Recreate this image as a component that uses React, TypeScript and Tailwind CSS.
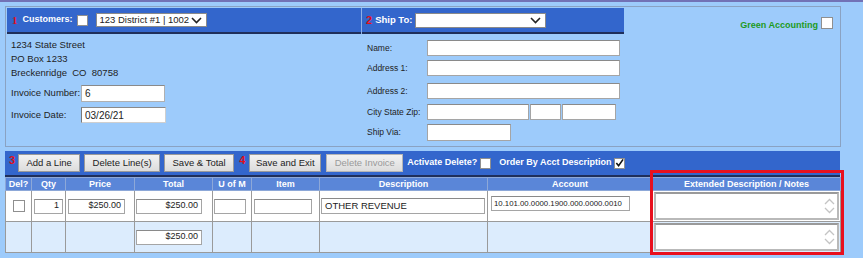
import React from 'react'

function Chevron({ className = '' }: { className?: string }) {
  return (
    <svg width={11} height={7} viewBox="0 0 11 7" fill="none" stroke="#222" strokeWidth={1.6} className={className}>
      <path d="M1 1 L5.5 5.5 L10 1" />
    </svg>
  )
}

function Check({ checked = false, size = 'w-[11px] h-[11px]' }: { checked?: boolean; size?: string }) {
  return (
    <span className={`${size} inline-flex items-center justify-center bg-white border border-[#8f8f8f] shrink-0`}>
      {checked && (
        <svg width={10} height={10} viewBox="0 0 10 10" fill="none" stroke="#111" strokeWidth={1.8}>
          <path d="M1.5 5 L4 8 L9 1" />
        </svg>
      )}
    </span>
  )
}

function Field({
  className = '',
  value = '',
  right = false,
  text = 'text-[9px] px-[3px]',
}: {
  className?: string
  value?: string
  right?: boolean
  text?: string
}) {
  return (
    <div
      className={`bg-white border border-[#a5a5a5] border-t-[#8a8a8a] text-[#222] flex items-center whitespace-nowrap shrink-0 ${text} ${right ? 'justify-end' : ''} ${className}`}
    >
      {value}
    </div>
  )
}

function Btn({ label, disabled = false, w }: { label: string; disabled?: boolean; w: string }) {
  return (
    <div
      className={`${w} h-[18px] flex items-center justify-center border bg-gradient-to-b from-[#f2f2f2] to-[#dcdcdc] text-[9.5px] whitespace-nowrap ${disabled ? 'text-[#9a9a9a] border-[#b5b5b5]' : 'text-[#222] border-[#9a9a9a]'}`}
    >
      {label}
    </div>
  )
}

function Notes() {
  return (
    <div className="h-[28px] bg-white border-2 border-[#b9b9b9] border-t-[#9a9a9a] flex justify-end pr-[2px]">
      <div className="flex flex-col justify-center gap-[2px]">
        <svg width={11} height={7} viewBox="0 0 11 7" fill="none" stroke="#c4c4c4" strokeWidth={1.3}>
          <path d="M1 6 L5.5 1.5 L10 6" />
        </svg>
        <svg width={11} height={7} viewBox="0 0 11 7" fill="none" stroke="#c4c4c4" strokeWidth={1.3}>
          <path d="M1 1 L5.5 5.5 L10 1" />
        </svg>
      </div>
    </div>
  )
}

const cols = [26, 34, 69, 78, 39, 68, 168, 165, 188]
const heads = ['Del?', 'Qty', 'Price', 'Total', 'U of M', 'Item', 'Description', 'Account', 'Extended Description / Notes']

export default function App() {
  return (
    <div className="relative w-[863px] h-[258px] overflow-hidden bg-[#9dcbfb] border-t-2 border-[#7272b6] font-['Liberation_Sans',Arial,sans-serif] text-[10px] text-[#1e1e1e]">
      {/* Top panel */}
      <div className="ml-[5px] mt-[4px] w-[836px] h-[141px] border border-[#8aa2c2] p-[1px] flex">
        {/* Customer column */}
        <div className="w-[354px] flex flex-col">
          <div className="h-[26px] bg-[#3366cc] border-b-2 border-[#1f2f5a] flex items-center pl-[5px] gap-[3px]">
            <span className="text-[#e0101a] font-bold text-[11px] font-['Liberation_Serif',serif]">1</span>
            <span className="text-white font-bold text-[9px] ml-[2px]">Customers:</span>
            <Check size="w-[11px] h-[11px] ml-[1px]" />
            <div className="ml-[5px] w-[111px] h-[14px] bg-white border border-[#8a8a8a] flex items-center justify-between pl-[3px] pr-[4px] text-[9.5px] text-[#222] whitespace-nowrap shrink-0">
              <span>123 District #1 | 1002</span>
              <Chevron />
            </div>
          </div>
          <div className="pl-[4px] pt-[4px] flex flex-col text-[9.5px]">
            <div className="h-[14px] flex items-center">1234 State Street</div>
            <div className="h-[14px] flex items-center">PO Box 1233</div>
            <div className="h-[14px] flex items-center whitespace-pre">Breckenridge  CO  80758</div>
            <div className="mt-[5px] flex items-center">
              <span className="w-[70px]">Invoice Number:</span>
              <Field className="w-[84px] h-[17px] border-[#b0b0b0]" text="text-[10px] px-[3px]" value="6" />
            </div>
            <div className="mt-[5px] flex items-center">
              <span className="w-[70px]">Invoice Date:</span>
              <Field className="w-[85px] h-[16px] border-[#cfcfcf] border-t-[#7a7a7a] border-l-[#7a7a7a]" text="text-[10px] px-[3px]" value="03/26/21" />
            </div>
          </div>
        </div>
        <div className="w-[1px] h-[26px] bg-[#8fb0e6]" />
        {/* Ship to column */}
        <div className="w-[262px] flex flex-col">
          <div className="h-[26px] bg-[#3366cc] border-b-2 border-[#1f2f5a] flex items-center pl-[4px] gap-[3px]">
            <span className="text-[#e0101a] font-bold text-[11px]">2</span>
            <span className="text-white font-bold text-[9.5px]">Ship To:</span>
            <div className="w-[131px] h-[15px] bg-white border border-[#8a8a8a] flex items-center justify-end px-[4px]">
              <Chevron />
            </div>
          </div>
          <div className="pl-[5px] pt-[6px] flex flex-col text-[8.5px]">
            <div className="flex items-center h-[16px]">
              <span className="w-[60px]">Name:</span>
              <Field className="w-[193px] h-[16px]" />
            </div>
            <div className="flex items-center h-[16px] mt-[4px]">
              <span className="w-[60px]">Address 1:</span>
              <Field className="w-[193px] h-[16px]" />
            </div>
            <div className="flex items-center h-[16px] mt-[7px]">
              <span className="w-[60px]">Address 2:</span>
              <Field className="w-[193px] h-[16px]" />
            </div>
            <div className="flex items-center h-[16px] mt-[5px]">
              <span className="w-[60px] whitespace-nowrap">City State Zip:</span>
              <Field className="w-[102px] h-[16px]" />
              <Field className="w-[31px] h-[16px] ml-[1px]" />
              <Field className="w-[54px] h-[16px] ml-[1px]" />
            </div>
            <div className="flex items-center h-[17px] mt-[4px]">
              <span className="w-[60px]">Ship Via:</span>
              <Field className="w-[84px] h-[17px]" />
            </div>
          </div>
        </div>
        {/* Green accounting */}
        <div className="flex-1 flex justify-end items-start pt-[9px] pr-[6px] gap-[3px]">
          <span className="text-[#1d9a1d] font-bold text-[9px] mt-[2px]">Green Accounting</span>
          <Check size="w-[12px] h-[12px]" />
        </div>
      </div>

      {/* Toolbar */}
      <div className="ml-[5px] mt-[4px] w-[835px] h-[26px] bg-[#3366cc] border-b-2 border-[#1f2f5a] flex items-center pl-[4px] gap-[3px]">
        <span className="text-[#e0101a] font-bold text-[11px] self-start mt-[1px]">3</span>
        <Btn label="Add a Line" w="w-[62px]" />
        <Btn label="Delete Line(s)" w="w-[76px] ml-[1px]" />
        <Btn label="Save & Total" w="w-[70px] ml-[1px]" />
        <span className="text-[#e0101a] font-bold text-[11px] self-start mt-[1px] ml-[2px]">4</span>
        <Btn label="Save and Exit" w="w-[72px] ml-[1px]" />
        <Btn label="Delete Invoice" disabled w="w-[77px] ml-[2px]" />
        <span className="text-white font-bold text-[9px] ml-[1px]">Activate Delete?</span>
        <Check />
        <span className="text-white font-bold text-[9px] ml-[5px]">Order By Acct Description</span>
        <Check checked />
      </div>

      {/* Lines table */}
      <table className="ml-[5px] border-collapse table-fixed w-[835px] text-[9.5px]">
        <colgroup>
          {cols.map((w, i) => (
            <col key={i} style={{ width: w }} />
          ))}
        </colgroup>
        <thead>
          <tr className="h-[13px] bg-[#5a86d8] text-white font-bold">
            {heads.map((h) => (
              <th key={h} className="border border-[#8da8d8] p-0 font-bold text-[9px] leading-[12px]">
                {h}
              </th>
            ))}
          </tr>
        </thead>
        <tbody>
          <tr className="h-[30px] bg-white">
            <td className="border border-[#9a9a9a] p-0">
              <div className="flex justify-center"><Check size="w-[12px] h-[12px]" /></div>
            </td>
            <td className="border border-[#9a9a9a] px-[1px]">
              <Field className="w-[29px] h-[15px] ml-[1px]" value="1" right />
            </td>
            <td className="border border-[#9a9a9a] px-[1px]">
              <Field className="w-[57px] h-[15px] ml-[1px]" value="$250.00" right />
            </td>
            <td className="border border-[#9a9a9a] px-[1px]">
              <Field className="w-[66px] h-[15px]" value="$250.00" right />
            </td>
            <td className="border border-[#9a9a9a] px-[1px]">
              <Field className="w-[32px] h-[15px]" />
            </td>
            <td className="border border-[#9a9a9a] px-[1px]">
              <Field className="w-[58px] h-[15px] ml-[1px]" />
            </td>
            <td className="border border-[#9a9a9a] px-[1px]">
              <Field className="w-[164px] h-[16px]" text="text-[9.5px] px-[3px]" value="OTHER REVENUE" />
            </td>
            <td className="border border-[#9a9a9a] px-[1px] align-top pt-[5px]">
              <Field className="w-[139px] h-[15px] ml-[2px]" text="text-[7.8px] px-[2px]" value="10.101.00.0000.1900.000.0000.0010" />
            </td>
            <td className="border border-[#9a9a9a] p-[1px]">
              <Notes />
            </td>
          </tr>
          <tr className="h-[30px] bg-[#dcecfd]">
            <td className="border border-[#9a9a9a]" />
            <td className="border border-[#9a9a9a]" />
            <td className="border border-[#9a9a9a]" />
            <td className="border border-[#9a9a9a] px-[1px]">
              <Field className="w-[66px] h-[15px]" value="$250.00" right />
            </td>
            <td className="border border-[#9a9a9a]" />
            <td className="border border-[#9a9a9a]" />
            <td className="border border-[#9a9a9a]" />
            <td className="border border-[#9a9a9a]" />
            <td className="border border-[#9a9a9a] p-[1px]">
              <Notes />
            </td>
          </tr>
        </tbody>
      </table>

      {/* Highlight overlay */}
      <div className="absolute left-[650px] top-[168px] w-[194px] h-[85px] border-[3px] border-[#e8101e] pointer-events-none" />
    </div>
  )
}
